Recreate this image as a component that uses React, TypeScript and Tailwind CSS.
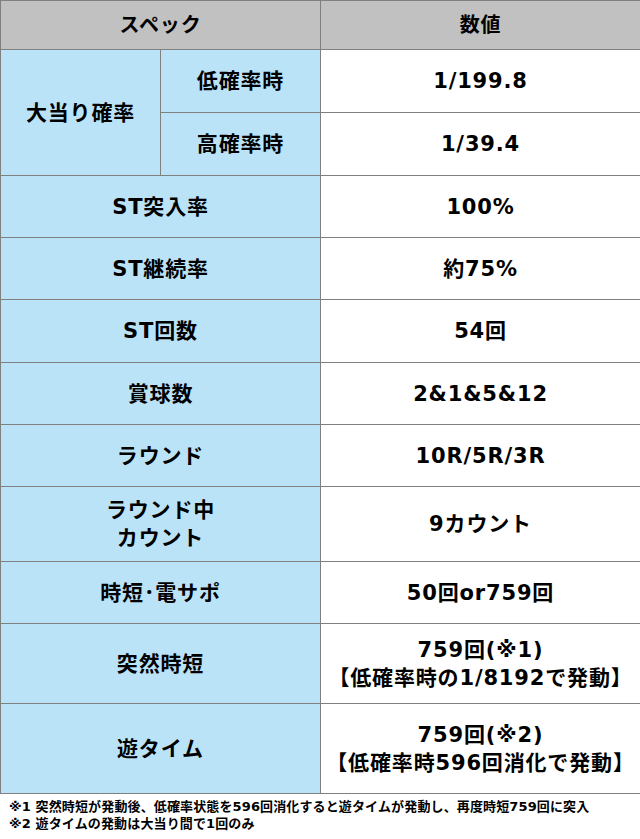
const font = "font-['DejaVu_Sans','Noto_Sans_CJK_JP',sans-serif]";

type Row = { label: React.ReactNode; value: React.ReactNode; h: string };

const rows: Row[] = [
  { label: "ST突入率", value: "100%", h: "h-[62px]" },
  { label: "ST継続率", value: "約75%", h: "h-[62px]" },
  { label: "ST回数", value: "54回", h: "h-[63px]" },
  { label: "賞球数", value: "2&1&5&12", h: "h-[62px]" },
  { label: "ラウンド", value: "10R/5R/3R", h: "h-[62px]" },
  {
    label: (
      <>
        ラウンド中
        <br />
        カウント
      </>
    ),
    value: "9カウント",
    h: "h-[75px]",
  },
  { label: "時短･電サポ", value: "50回or759回", h: "h-[62px]" },
  {
    label: "突然時短",
    value: (
      <>
        759回(※1)
        <br />
        【低確率時の1/8192で発動】
      </>
    ),
    h: "h-[80px]",
  },
  {
    label: "遊タイム",
    value: (
      <>
        759回(※2)
        <br />
        【低確率時596回消化で発動】
      </>
    ),
    h: "h-[90px]",
  },
];

const cell = "border border-[#808080] text-center align-middle p-0";
const blue = "bg-[#bbe3f8]";

export default function App() {
  return (
    <div className={`w-[640px] bg-white text-black font-bold ${font}`}>
      <table className="w-[640px] border-collapse table-fixed text-[21px] leading-[28px] tracking-[0.04em]">
        <colgroup>
          <col className="w-[160px]" />
          <col className="w-[160px]" />
          <col className="w-[320px]" />
        </colgroup>
        <tbody>
          <tr className="h-[49px] bg-[#c1c1c1]">
            <td colSpan={2} className={`${cell} text-[20px]`}>スペック</td>
            <td className={`${cell} text-[20px]`}>数値</td>
          </tr>
          <tr className="h-[63px]">
            <td rowSpan={2} className={`${cell} ${blue}`}>大当り確率</td>
            <td className={`${cell} ${blue}`}>低確率時</td>
            <td className={cell}>1/199.8</td>
          </tr>
          <tr className="h-[63px]">
            <td className={`${cell} ${blue}`}>高確率時</td>
            <td className={cell}>1/39.4</td>
          </tr>
          {rows.map((r, i) => (
            <tr key={i} className={r.h}>
              <td colSpan={2} className={`${cell} ${blue}`}>{r.label}</td>
              <td className={cell}>{r.value}</td>
            </tr>
          ))}
        </tbody>
      </table>
      <div className="px-[9px] pt-[4px] text-[13px] leading-[17px] tracking-[0.01em]">
        <p>※1 突然時短が発動後、低確率状態を596回消化すると遊タイムが発動し、再度時短759回に突入</p>
        <p>※2 遊タイムの発動は大当り間で1回のみ</p>
      </div>
    </div>
  );
}
